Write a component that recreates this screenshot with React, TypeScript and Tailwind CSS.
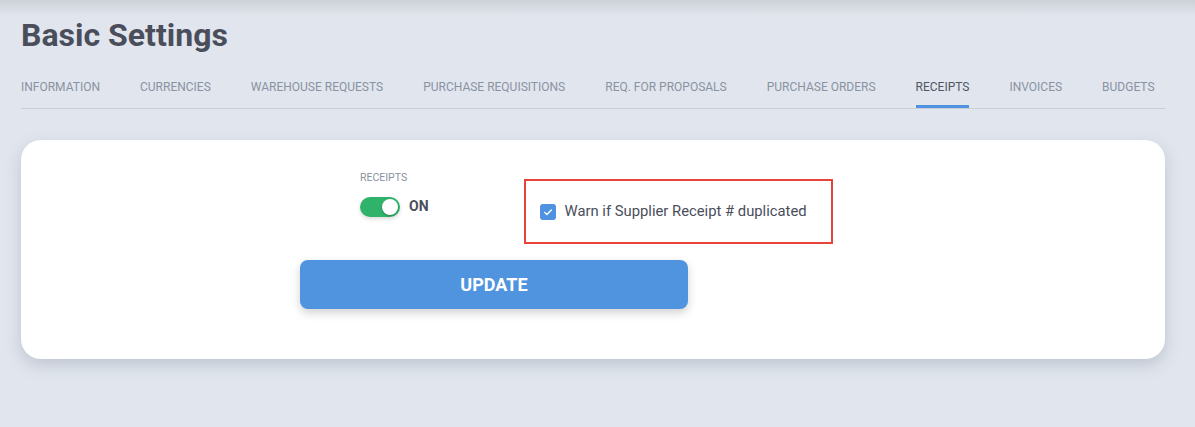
const TABS = [
  "INFORMATION",
  "CURRENCIES",
  "WAREHOUSE REQUESTS",
  "PURCHASE REQUISITIONS",
  "REQ. FOR PROPOSALS",
  "PURCHASE ORDERS",
  "RECEIPTS",
  "INVOICES",
  "BUDGETS",
];

const ACTIVE = "RECEIPTS";

export default function App() {
  return (
    <div className="h-[427px] w-[1195px] overflow-hidden bg-[#e1e6ee] font-['Roboto',sans-serif]">
      <div className="h-4 bg-gradient-to-b from-[#cdd1d7] to-[#e1e6ee]" />
      <div className="px-[21px] pr-[30px]">
        <h1 className="mt-[1px] text-[32px] leading-[36px] font-bold text-[#4a4e5b]">
          Basic Settings
        </h1>

        <div className="mt-[27px] flex gap-10 border-b border-[#c9ced7]">
          {TABS.map((tab) => (
            <div
              key={tab}
              className={
                tab === ACTIVE
                  ? "border-b-[3px] border-[#4f93e0] pb-[11px] text-[12px] leading-[14px] text-[#4f5563]"
                  : "border-b-[3px] border-transparent pb-[11px] text-[12px] leading-[14px] text-[#8a92a2]"
              }
            >
              {tab}
            </div>
          ))}
        </div>

        <div className="mt-[31px] h-[219px] rounded-[20px] bg-white shadow-[0_6px_16px_rgba(90,100,120,0.25)]">
          <div className="flex pt-[32px] pl-[339px]">
            <div className="flex flex-col">
              <span className="text-[10.5px] leading-[12px] text-[#8a92a2]">RECEIPTS</span>
              <div className="mt-[12px] flex items-center gap-[9px]">
                <div className="flex h-[20px] w-[40px] items-center justify-end rounded-full bg-[#2fb36b] px-[2px] shadow-[0_2px_4px_rgba(0,0,0,0.15)]">
                  <div className="h-[16px] w-[16px] rounded-full bg-white shadow-[0_1px_2px_rgba(0,0,0,0.3)]" />
                </div>
                <span className="text-[14px] font-bold text-[#4a4e5b]">ON</span>
              </div>
            </div>

            <div className="mt-[7px] ml-[95px] flex h-[65px] w-[309px] items-center border-2 border-[#e8433a] pl-[14px]">
              <div className="flex h-[16px] w-[16px] items-center justify-center rounded-[3px] bg-[#4f93e0]">
                <svg viewBox="0 0 16 16" className="h-[12px] w-[12px]" fill="none">
                  <path d="M3.5 8.5l3 2.8 6-6" stroke="white" strokeWidth="1.8" strokeLinecap="round" strokeLinejoin="round" />
                </svg>
              </div>
              <span className="ml-[9px] text-[14.8px] text-[#4a4e5b]">Warn if Supplier Receipt # duplicated</span>
            </div>
          </div>

          <button className="mt-[16px] ml-[279px] flex h-[49px] w-[388px] items-center justify-center rounded-[8px] bg-[#5094e0] text-[18px] font-bold text-white shadow-[0_4px_10px_rgba(0,0,0,0.18)]">
            UPDATE
          </button>
        </div>
      </div>
    </div>
  );
}
